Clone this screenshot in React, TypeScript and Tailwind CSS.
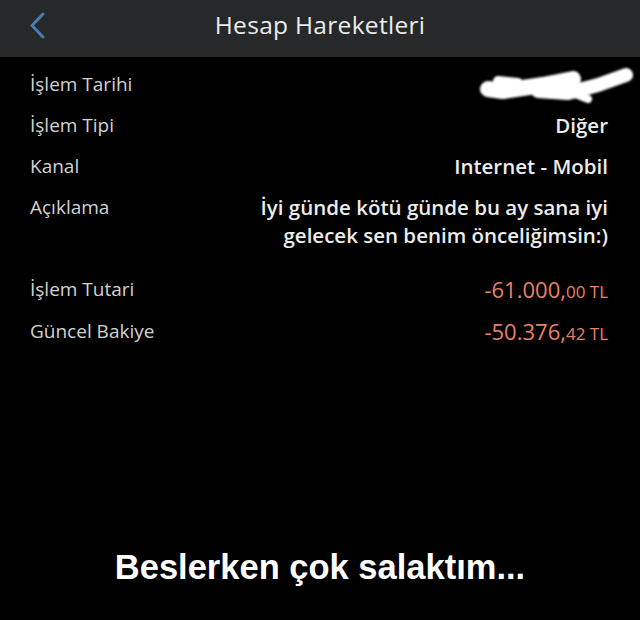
import React from "react";

const Row = ({ label, children, className = "" }: { label: string; children: React.ReactNode; className?: string }) => (
  <div className={`flex justify-between items-start ${className}`}>
    <div className="text-[19px] text-[#d2d2d2] leading-[24px]">{label}</div>
    <div className="text-right">{children}</div>
  </div>
);

export default function App() {
  return (
    <div className="w-[640px] h-[620px] bg-black flex flex-col" style={{ fontFamily: '"Open Sans", "Noto Sans", sans-serif' }}>
      <div className="h-[57px] bg-[#262829] relative flex items-center justify-center shrink-0 pb-[6px]">
        <svg className="absolute left-[28px] top-[12px]" width="18" height="27" viewBox="0 0 18 27">
          <path d="M15 2 L4 13.5 L15 25" fill="none" stroke="#4a7db3" strokeWidth="3" strokeLinecap="round" strokeLinejoin="round" />
        </svg>
        <div className="text-[24.5px] text-[#ececec] tracking-[0.3px]">Hesap Hareketleri</div>
      </div>
      <div className="pl-[30px] pr-[32px] pt-[15px] flex flex-col">
        <Row label="İşlem Tarihi">
          <div className="relative w-[150px] h-[24px]">
            <svg className="absolute left-[10px] top-[-12px]" width="170" height="50" viewBox="470 55 170 50">
              <g fill="none" stroke="white" strokeLinecap="round" strokeLinejoin="round" style={{ filter: "blur(0.8px)" }}>
                <path d="M490 84 L505 86 L545 80 L575 74" strokeWidth="16" />
                <path d="M540 86 L570 88 L600 80 L628 70" strokeWidth="14" />
                <path d="M575 88 L590 94" strokeWidth="8" />
                <path d="M500 76 L520 78" strokeWidth="10" />
              </g>
            </svg>
          </div>
        </Row>
        <Row label="İşlem Tipi" className="mt-[17px]">
          <div className="text-[20.5px] font-semibold text-[#ececec] leading-[24px]">Diğer</div>
        </Row>
        <Row label="Kanal" className="mt-[17px]">
          <div className="text-[20.5px] font-semibold text-[#ececec] leading-[24px]">Internet - Mobil</div>
        </Row>
        <Row label="Açıklama" className="mt-[17px]">
          <div className="text-[20.5px] font-semibold text-[#ececec] leading-[28px] mt-[-2px]">
            İyi günde kötü günde bu ay sana iyi<br />gelecek sen benim önceliğimsin:)
          </div>
        </Row>
        <Row label="İşlem Tutari" className="mt-[28px]">
          <div className="text-[22px] text-[#e8806a] leading-[24px]">
            -61.000,<span className="text-[17px]">00 TL</span>
          </div>
        </Row>
        <Row label="Güncel Bakiye" className="mt-[15px]">
          <div className="text-[22px] text-[#e8806a] leading-[24px]">
            -50.376,<span className="text-[17px]">42 TL</span>
          </div>
        </Row>
      </div>
      <div className="flex-1" />
      <div className="text-center text-white font-bold text-[34.5px] leading-[44px] mb-[31px]" style={{ fontFamily: '"Liberation Sans", Arial, sans-serif' }}>
        Beslerken çok salaktım...
      </div>
    </div>
  );
}
